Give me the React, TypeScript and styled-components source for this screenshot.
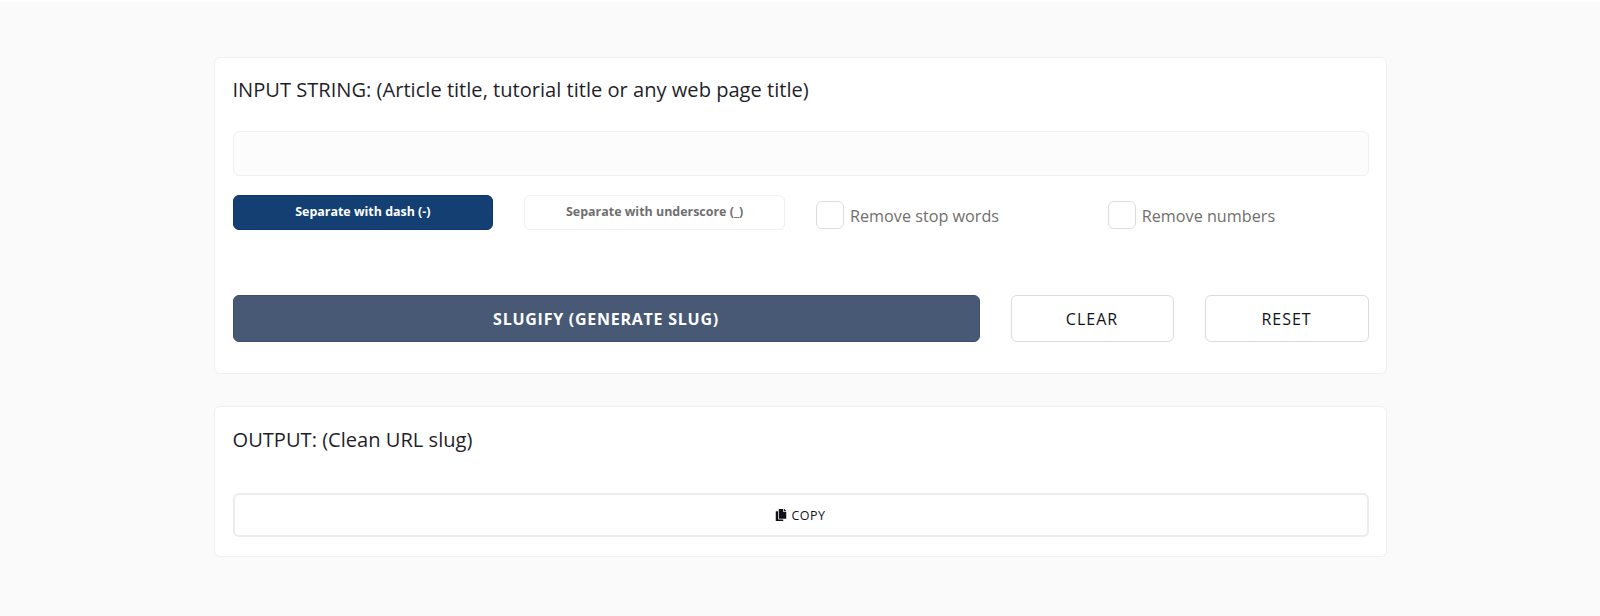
import React, { FC } from "react";
import styled, { createGlobalStyle } from "styled-components";
import { FaCopy } from "react-icons/fa";

const GlobalStyle = createGlobalStyle`
  html, body {
    margin: 0;
    padding: 0;
    background: #fafafa;
    font-family: "Open Sans", "Liberation Sans", sans-serif;
    color: #1f1f2b;
  }
  body {
    border-top: 2px solid #fff;
  }
`;

const Page = styled.div`
  width: 1173px;
  margin: 0 auto;
  padding: 55px 0 54px;
  display: flex;
  flex-direction: column;
  gap: 32px;
`;

const Card = styled.section`
  box-sizing: border-box;
  background: #fff;
  border: 1px solid #f0f0f0;
  border-radius: 6px;
  padding: 18px 17px 31px 18px;
`;

const Title = styled.h2`
  margin: 0;
  font-size: 20.1px;
  font-weight: 400;
  line-height: 28px;
`;

const TextInput = styled.input`
  display: block;
  box-sizing: border-box;
  width: 100%;
  height: 45px;
  margin-top: 27px;
  background: #fcfcfc;
  border: 1px solid #f0f0f0;
  border-radius: 6px;
  outline: none;
`;

const OptionGrid = styled.div`
  display: grid;
  grid-template-columns: repeat(4, 1fr);
  column-gap: 31px;
  margin-top: 19px;
  align-items: start;
`;

const SeparatorButton = styled.button<{ $active?: boolean }>`
  box-sizing: border-box;
  height: 35px;
  padding-bottom: 3px;
  font-family: inherit;
  font-size: 12.45px;
  font-weight: 700;
  border-radius: 6px;
  border: 1px solid ${(p) => (p.$active ? "#0f3570" : "#f0f0f0")};
  background: ${(p) => (p.$active ? "#133f73" : "#fff")};
  color: ${(p) => (p.$active ? "#fff" : "#6f6f6f")};
`;

const CheckLabel = styled.label`
  display: flex;
  align-items: center;
  gap: 6px;
  margin-top: 6px;
  font-size: 16.2px;
  line-height: 30px;
  color: #716f6c;
`;

const CheckBox = styled.span`
  box-sizing: border-box;
  width: 28px;
  height: 28px;
  margin-bottom: 2px;
  background: #fff;
  border: 1px solid #dcdcdc;
  border-radius: 6px;
`;

const ActionRow = styled.div`
  display: grid;
  grid-template-columns: 1fr 163px 164px;
  column-gap: 31px;
  margin-top: 64px;
`;

const PrimaryButton = styled.button`
  box-sizing: border-box;
  height: 47px;
  font-family: inherit;
  font-size: 16px;
  font-weight: 700;
  letter-spacing: 0.75px;
  color: #fff;
  background: #475975;
  border: 1px solid #3c4f6d;
  border-radius: 6px;
`;

const OutlineButton = styled.button`
  box-sizing: border-box;
  height: 47px;
  font-family: inherit;
  font-size: 16px;
  font-weight: 500;
  letter-spacing: 1px;
  color: #111118;
  background: #fff;
  border: 1px solid #dcdcdc;
  border-radius: 6px;
`;

const CopyButton = styled.button`
  display: flex;
  align-items: center;
  justify-content: center;
  gap: 4px;
  box-sizing: border-box;
  width: 100%;
  height: 44px;
  margin-top: 39px;
  font-family: inherit;
  font-size: 12.5px;
  font-weight: 500;
  letter-spacing: 0.5px;
  color: #111118;
  background: #fff;
  border: 2px solid #ececec;
  border-radius: 6px;
`;

const OutputCard = styled(Card)`
  padding-top: 19px;
  padding-bottom: 19px;
`;

const App: FC = () => (
  <>
    <GlobalStyle />
    <Page>
      <Card>
        <Title>INPUT STRING: (Article title, tutorial title or any web page title)</Title>
        <TextInput type="text" />
        <OptionGrid>
          <SeparatorButton $active>Separate with dash (-)</SeparatorButton>
          <SeparatorButton>Separate with underscore (_)</SeparatorButton>
          <CheckLabel>
            <CheckBox />
            Remove stop words
          </CheckLabel>
          <CheckLabel>
            <CheckBox />
            Remove numbers
          </CheckLabel>
        </OptionGrid>
        <ActionRow>
          <PrimaryButton>SLUGIFY (GENERATE SLUG)</PrimaryButton>
          <OutlineButton>CLEAR</OutlineButton>
          <OutlineButton>RESET</OutlineButton>
        </ActionRow>
      </Card>
      <OutputCard>
        <Title>OUTPUT: (Clean URL slug)</Title>
        <CopyButton>
          <FaCopy size={12} />
          COPY
        </CopyButton>
      </OutputCard>
    </Page>
  </>
);

export default App;
